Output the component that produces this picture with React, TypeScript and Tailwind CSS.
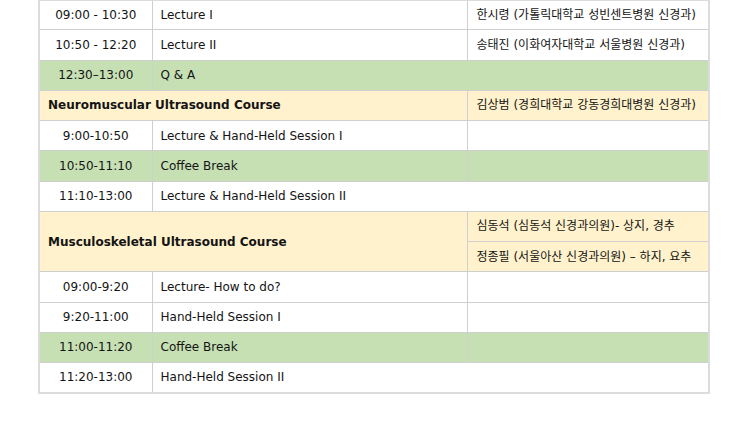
import React from 'react';

type Row =
  | { kind: 'slot'; time: string; title: string; speaker?: string; green?: boolean; span?: boolean }
  | { kind: 'course'; title: string; speakers: string[] };

const ROWS: Row[] = [
  { kind: 'slot', time: '09:00 - 10:30', title: 'Lecture I', speaker: '한시령 (가톨릭대학교 성빈센트병원 신경과)' },
  { kind: 'slot', time: '10:50 - 12:20', title: 'Lecture II', speaker: '송태진 (이화여자대학교 서울병원 신경과)' },
  { kind: 'slot', time: '12:30–13:00', title: 'Q & A', green: true, span: true },
  { kind: 'course', title: 'Neuromuscular Ultrasound Course', speakers: ['김상범 (경희대학교 강동경희대병원 신경과)'] },
  { kind: 'slot', time: '9:00-10:50', title: 'Lecture & Hand-Held Session I', speaker: '' },
  { kind: 'slot', time: '10:50-11:10', title: 'Coffee Break', green: true, speaker: '' },
  { kind: 'slot', time: '11:10-13:00', title: 'Lecture & Hand-Held Session II', span: true },
  {
    kind: 'course',
    title: 'Musculoskeletal Ultrasound Course',
    speakers: ['심동석 (심동석 신경과의원)- 상지, 경추', '정종필 (서울아산 신경과의원) – 하지, 요추'],
  },
  { kind: 'slot', time: '09:00-9:20', title: 'Lecture- How to do?', speaker: '' },
  { kind: 'slot', time: '9:20-11:00', title: 'Hand-Held Session I', speaker: '' },
  { kind: 'slot', time: '11:00-11:20', title: 'Coffee Break', green: true, speaker: '' },
  { kind: 'slot', time: '11:20-13:00', title: 'Hand-Held Session II', span: true },
];

const cell = 'border border-[#cfcfcf] h-[30.25px] p-0 align-middle';
const ko = "font-['DejaVu_Sans','Noto_Sans_CJK_KR',sans-serif]";

export default function App() {
  return (
    <div className="w-[750px] h-[423px] overflow-hidden bg-white">
      <div className="pl-[38px] -mt-[1.5px]">
        <table className={`w-[672px] border-collapse border-2 border-[#dcdcdc] text-[12px] text-[#141414] ${ko}`}>
          <colgroup>
            <col className="w-[113px]" />
            <col className="w-[315px]" />
            <col />
          </colgroup>
          <tbody>
            {ROWS.map((r, i) => {
              if (r.kind === 'course') {
                return (
                  <React.Fragment key={i}>
                    <tr className="bg-[#fff2cc]">
                      <td colSpan={2} rowSpan={r.speakers.length} className={`${cell} pl-[8px] font-bold`}>
                        {r.title}
                      </td>
                      <td className={`${cell} pl-[9px]`}>{r.speakers[0]}</td>
                    </tr>
                    {r.speakers.slice(1).map((s, j) => (
                      <tr key={j} className="bg-[#fff2cc]">
                        <td className={`${cell} pl-[9px]`}>{s}</td>
                      </tr>
                    ))}
                  </React.Fragment>
                );
              }
              return (
                <tr key={i} className={r.green ? 'bg-[#c6e0b4]' : 'bg-white'}>
                  <td className={`${cell} text-center`}>{r.time}</td>
                  <td colSpan={r.span ? 2 : 1} className={`${cell} pl-[8px]`}>
                    {r.title}
                  </td>
                  {!r.span && <td className={`${cell} pl-[9px]`}>{r.speaker}</td>}
                </tr>
              );
            })}
          </tbody>
        </table>
      </div>
    </div>
  );
}
